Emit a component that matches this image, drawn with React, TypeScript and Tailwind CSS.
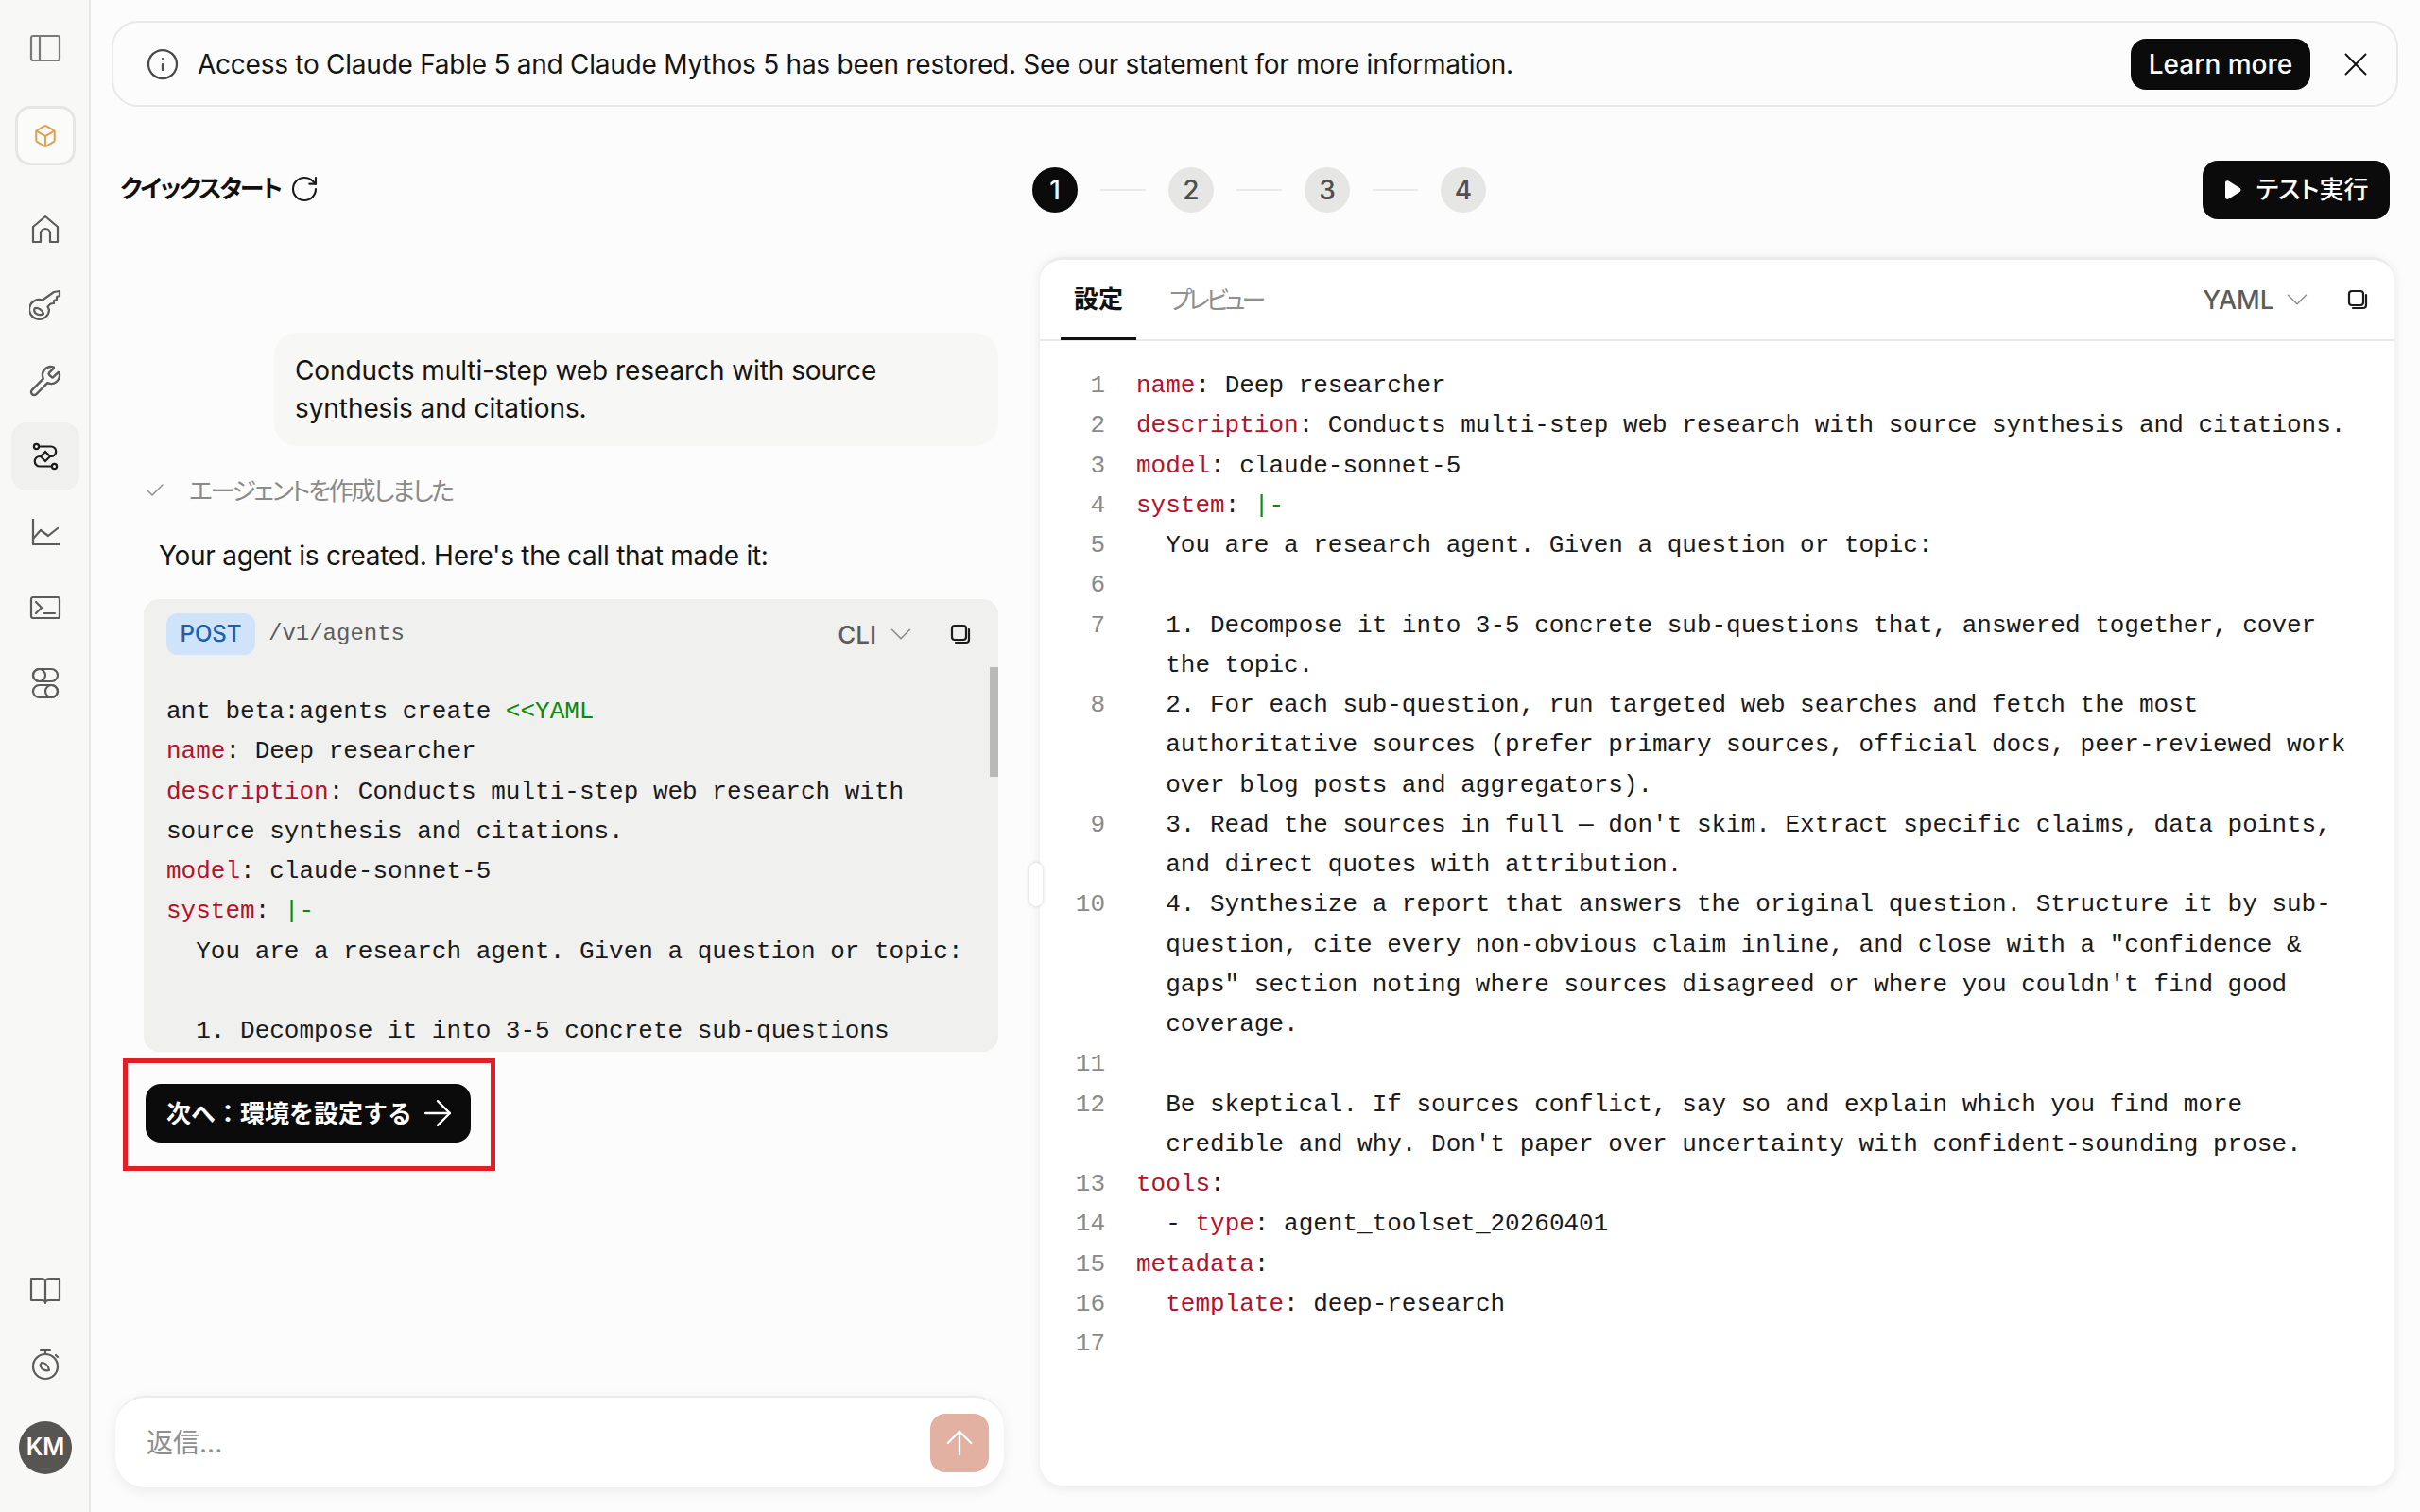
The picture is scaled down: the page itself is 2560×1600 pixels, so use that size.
import React from 'react';
import { ArrowRight, ArrowUp, Box, Check, ChevronDown, Info, RotateCw, Wrench, X } from 'lucide-react';

const sans = 'font-[Inter,"Noto_Sans_CJK_JP",sans-serif]';
const mono = 'font-["Liberation_Mono","Noto_Sans_CJK_JP",monospace]';

const K = ({ children }: { children: React.ReactNode }) => <span className="text-[#b5122b]">{children}</span>;
const G = ({ children }: { children: React.ReactNode }) => <span className="text-[#0a8a0a]">{children}</span>;

const stroke = { fill: 'none', stroke: 'currentColor', strokeWidth: 2.2, strokeLinecap: 'round', strokeLinejoin: 'round' } as const;

const PanelIcon = () => (
  <svg width="34" height="30" viewBox="0 0 34 30" {...stroke}>
    <rect x="2" y="2" width="30" height="26" rx="2" />
    <path d="M11 2v26" />
  </svg>
);

const HomeIcon = () => (
  <svg width="32" height="32" viewBox="0 0 32 32" {...stroke}>
    <path d="M3 29V13L16 2l13 11v16h-8v-9a5 5 0 0 0-10 0v9z" />
  </svg>
);

const KeyIcon = () => (
  <svg width="34" height="34" viewBox="0 0 34 34" {...stroke}>
    <path d="M21 22a10.500 10.500 0 1 1-7-10.500L26 3l6-1v5l-3 1v3l-3 1v3l-3.500.5-3 3z" />
    <path d="M6 20c3-1 8 2 9 6-3 2-7 1-9-1-1-2-1-4 0-5z" />
  </svg>
);

const AgentsIcon = () => (
  <svg width="32" height="32" viewBox="0 0 32 32" fill="none" stroke="currentColor" strokeWidth="2.2">
    <circle cx="6.5" cy="5.5" r="2.6" />
    <circle cx="25.5" cy="26.5" r="2.6" />
    <path d="M10 5.5h12a5.2 5.2 0 0 1 0 10.500H10a5.200 5.200 0 0 0 0 10.500h12" />
    <path d="M16 11l5 5-5 5-5-5z" fill="#f0f0ee" />
  </svg>
);

const ChartIcon = () => (
  <svg width="32" height="30" viewBox="0 0 32 30" {...stroke} strokeLinecap="square">
    <path d="M3 2v26h27" />
    <path d="M3 22l8-9 8 6 10-8" strokeLinecap="round" />
  </svg>
);

const TerminalIcon = () => (
  <svg width="34" height="26" viewBox="0 0 34 26" {...stroke}>
    <rect x="2" y="2" width="30" height="22" rx="2" />
    <path d="M7 7l6 6-6 6M15 19h12" />
  </svg>
);

const TogglesIcon = () => (
  <svg width="32" height="34" viewBox="0 0 32 34" {...stroke}>
    <rect x="3" y="2" width="26" height="13" rx="6.500" />
    <rect x="3" y="19" width="26" height="13" rx="6.500" />
    <circle cx="9.500" cy="8.500" r="6.500" />
    <circle cx="22.500" cy="25.500" r="6.500" />
  </svg>
);

const BookIcon = () => (
  <svg width="34" height="30" viewBox="0 0 34 30" {...stroke}>
    <path d="M2 2h10c3 0 5 1 5 3 0-2 2-3 5-3h10v23H21c-2 0-4 1-4 3 0-2-2-3-4-3H2zM17 5v23" />
  </svg>
);

const TimerIcon = () => (
  <svg width="32" height="34" viewBox="0 0 32 34" {...stroke}>
    <circle cx="16" cy="19" r="13" />
    <path d="M11 2h10M16 2v4M27 7l2 2" />
    <path d="M12 15c3 0 7 2 8 8-4 1-8-1-9-4-.4-1.500 0-3 1-4z" />
  </svg>
);

const CopyIcon = () => (
  <svg width="22" height="22" viewBox="0 0 22 22" {...stroke}>
    <rect x="2" y="2" width="15" height="15" rx="3" />
    <path d="M20 6v11a3 3 0 0 1-3 3H6" />
  </svg>
);

const NavBtn = ({ children, active }: { children: React.ReactNode; active?: boolean }) => (
  <div
    className={`flex h-[72px] w-[72px] items-center justify-center rounded-2xl ${
      active ? 'bg-[#f0f0ee] text-[#1c1c1c]' : 'text-[#5c5c5a]'
    }`}
  >
    {children}
  </div>
);

const Sidebar = () => (
  <aside className="flex h-full w-[96px] shrink-0 flex-col items-center border-r-2 border-[#e6e6e4] bg-[#f8f8f7] pb-10 pl-[2px]">
    <div className="mt-[36px] text-[#7a7a78]">
      <PanelIcon />
    </div>
    <div className="mt-[46px] flex h-[63px] w-[64px] items-center justify-center rounded-2xl border-[3px] border-[#e6e6e4] bg-[#fbfbfa] text-[#dea257]">
      <Box size={26} strokeWidth={1.9} />
    </div>
    <div className="mt-[32px] flex flex-col gap-2">
      <NavBtn><HomeIcon /></NavBtn>
      <NavBtn><KeyIcon /></NavBtn>
      <NavBtn><Wrench size={36} strokeWidth={1.6} /></NavBtn>
      <NavBtn active><AgentsIcon /></NavBtn>
      <NavBtn><ChartIcon /></NavBtn>
      <NavBtn><TerminalIcon /></NavBtn>
      <NavBtn><TogglesIcon /></NavBtn>
    </div>
    <div className="mt-auto flex flex-col items-center text-[#5c5c5a]">
      <BookIcon />
      <div className="mt-[46px]"><TimerIcon /></div>
      <div className="mt-[43px] flex h-14 w-14 items-center justify-center rounded-full bg-[#575552] text-[25px] font-semibold text-white">
        KM
      </div>
    </div>
  </aside>
);

const Banner = () => (
  <div className="ml-[22px] mr-[23px] mt-[22px] flex h-[91px] shrink-0 items-center rounded-[28px] border-2 border-[#e9e9e7] pl-[34px] pr-[22px]">
    <Info size={36} strokeWidth={1.5} className="text-[#4a4a48]" />
    <span className="ml-[19px] text-[28px] tracking-[-0.25px] text-[#141413]">
      Access to Claude Fable 5 and Claude Mythos 5 has been restored. See our statement for more information.
    </span>
    <button className="ml-auto flex h-[54px] w-[190px] items-center justify-center rounded-2xl bg-[#0b0b0b] text-[28px] font-medium text-white">
      Learn more
    </button>
    <X size={42} strokeWidth={1.1} className="ml-[27px] text-[#111]" />
  </div>
);

const Step = ({ n, on }: { n: number; on?: boolean }) => (
  <div
    className={`flex h-12 w-12 items-center justify-center rounded-full text-[28px] font-medium ${
      on ? 'bg-[#0b0b0b] text-white' : 'bg-[#e6e6e4] text-[#504f4d]'
    }`}
  >
    {n}
  </div>
);

const StepLine = () => <div className="mx-6 h-[2px] w-12 bg-[#e9e9e7]" />;

const ChatColumn = () => (
  <div className="flex w-[1004px] shrink-0 flex-col pl-[38px]">
    <div className="ml-[-7px] flex h-[62px] items-center pb-[3px]">
      <span className="text-[26px] font-semibold tracking-[-2px] text-[#111] [font-feature-settings:'palt']">クイックスタート</span>
      <RotateCw size={32} strokeWidth={1.6} className="ml-[9px] text-[#1c1c1c]" />
    </div>
    <div className="ml-[156px] mt-[120px] w-[766px] rounded-3xl bg-[#f7f7f5] py-5 pl-[22px] pr-8 text-[28px] leading-[40px] tracking-[-0.08px] text-[#141413]">
      Conducts multi-step web research with source synthesis and citations.
    </div>
    <div className="ml-[18px] mt-[28px] flex h-[38px] items-center text-[#8a8a88]">
      <Check size={24} strokeWidth={1.4} />
      <span className="ml-6 text-[26px] tracking-[-2.3px] [font-feature-settings:'palt']">エージェントを作成しました</span>
    </div>
    <div className="ml-[34px] mt-[30px] text-[28px] leading-[40px] tracking-[-0.28px] text-[#141413]">
      Your agent is created. Here's the call that made it:
    </div>
    <div className="relative ml-[18px] mt-[26px] h-[479px] w-[904px] overflow-hidden rounded-2xl bg-[#f0f0ef]">
      <div className="flex h-[72px] items-center pl-6 pr-[29px] pt-[2px]">
        <span className="flex h-[44px] w-[94px] items-center justify-center rounded-xl bg-[#cfe3fb] text-[24px] font-medium text-[#1d5fa8]">
          POST
        </span>
        <span className={`${mono} ml-[14px] text-[24px] text-[#5c5c5a]`}>/v1/agents</span>
        <span className="ml-auto text-[26px] font-medium text-[#5c5c5a]">CLI</span>
        <ChevronDown size={38} strokeWidth={1} className="ml-[7px] text-[#8a8a88]" />
        <div className="ml-[33px] text-[#1c1c1c]"><CopyIcon /></div>
      </div>
      <div className={`${mono} mt-[26px] whitespace-pre-wrap pl-6 pr-8 text-[26px] leading-[42.25px] text-[#1a1a1a]`}>
        <div>ant beta:agents create <G>&lt;&lt;YAML</G></div>
        <div><K>name</K>: Deep researcher</div>
        <div><K>description</K>: Conducts multi-step web research with</div>
        <div>source synthesis and citations.</div>
        <div><K>model</K>: claude-sonnet-5</div>
        <div><K>system</K>: <G>|-</G></div>
        <div>  You are a research agent. Given a question or topic:</div>
        <div>&nbsp;</div>
        <div>  1. Decompose it into 3-5 concrete sub-questions</div>
      </div>
      <div className="absolute right-0 top-[72px] h-[116px] w-[9px] bg-[#b9b9b7]" />
    </div>
    <div className="relative ml-[20px] mt-[34px] flex h-[62px] w-[344px] items-center rounded-2xl bg-[#0b0b0b] pl-[22px] text-white">
      <span className="text-[26px] font-semibold">次へ：環境を設定する</span>
      <ArrowRight size={44} strokeWidth={1.3} className="absolute left-[287px] top-[9px]" />
      <div className="pointer-events-none absolute -left-6 -top-[27px] h-[119px] w-[394px] border-[5px] border-[#e01f26]" />
    </div>
    <div className="ml-[-12px] mt-auto flex h-[97px] w-[940px] shrink-0 items-center rounded-[32px] border-t-2 border-[#ececea] bg-white pl-[33px] pr-4 shadow-[0_4px_14px_rgba(0,0,0,0.07)]">
      <span className="text-[28px] text-[#8f8f8d]">返信...</span>
      <div className="ml-auto flex h-[62px] w-[62px] items-center justify-center rounded-2xl bg-[#e2b1a1] text-white">
        <ArrowUp size={42} strokeWidth={1.3} />
      </div>
    </div>
  </div>
);

const yamlLines: { n: number; rows: React.ReactNode[] }[] = [
  { n: 1, rows: [<><K>name</K>: Deep researcher</>] },
  { n: 2, rows: [<><K>description</K>: Conducts multi-step web research with source synthesis and citations.</>] },
  { n: 3, rows: [<><K>model</K>: claude-sonnet-5</>] },
  { n: 4, rows: [<><K>system</K>: <G>|-</G></>] },
  { n: 5, rows: ['  You are a research agent. Given a question or topic:'] },
  { n: 6, rows: [' '] },
  { n: 7, rows: ['  1. Decompose it into 3-5 concrete sub-questions that, answered together, cover', '  the topic.'] },
  { n: 8, rows: ['  2. For each sub-question, run targeted web searches and fetch the most', '  authoritative sources (prefer primary sources, official docs, peer-reviewed work', '  over blog posts and aggregators).'] },
  { n: 9, rows: ["  3. Read the sources in full — don't skim. Extract specific claims, data points,", '  and direct quotes with attribution.'] },
  { n: 10, rows: ['  4. Synthesize a report that answers the original question. Structure it by sub-', '  question, cite every non-obvious claim inline, and close with a "confidence &', "  gaps\" section noting where sources disagreed or where you couldn't find good", '  coverage.'] },
  { n: 11, rows: [' '] },
  { n: 12, rows: ['  Be skeptical. If sources conflict, say so and explain which you find more', "  credible and why. Don't paper over uncertainty with confident-sounding prose."] },
  { n: 13, rows: [<><K>tools</K>:</>] },
  { n: 14, rows: [<>  - <K>type</K>: agent_toolset_20260401</>] },
  { n: 15, rows: [<><K>metadata</K>:</>] },
  { n: 16, rows: [<>  <K>template</K>: deep-research</>] },
  { n: 17, rows: [' '] },
];

const ConfigColumn = () => (
  <div className="flex min-w-0 flex-1 flex-col pr-[27px]">
    <div className="flex h-[62px] items-center">
      <div className="ml-[-8px] flex items-center">
        <Step n={1} on />
        <StepLine />
        <Step n={2} />
        <StepLine />
        <Step n={3} />
        <StepLine />
        <Step n={4} />
      </div>
      <button className="ml-auto mr-[5px] flex h-[62px] w-[198px] items-center justify-center gap-[14px] rounded-2xl bg-[#0b0b0b] text-[26px] font-medium text-white">
        <svg width="20" height="22" viewBox="0 0 20 22" fill="white"><path d="M2 3.500C2 1.500 3.800.6 5.500 1.600l12 7.500c1.300.8 1.300 3 0 3.800l-12 7.500C3.800 21.400 2 20.500 2 18.500z" /></svg>
        <span className="pb-[2px] [font-feature-settings:'palt']">テスト実行</span>
      </button>
    </div>
    <div className="mt-[40px] flex h-[1300px] flex-col rounded-[24px] border-t-[3px] border-[#ebebe9] bg-white shadow-[0_2px_12px_rgba(0,0,0,0.09)]">
      <div className="flex h-[86px] shrink-0 items-center border-b-2 border-[#e9e9e7] pl-[22px] pr-[28px]">
        <div className="-mb-[2px] flex h-full w-[80px] items-center justify-center border-b-[3px] border-[#111]">
          <span className="text-[26px] font-semibold text-[#111]">設定</span>
        </div>
        <span className="ml-[35px] text-[26px] tracking-[-4px] text-[#8f8f8d] [font-feature-settings:'palt']">プレビュー</span>
        <span className="ml-auto pt-[2px] text-[27px] font-medium text-[#5c5c5a]">YAML</span>
        <ChevronDown size={38} strokeWidth={1} className="ml-[5px] text-[#8f8f8d]" />
        <div className="ml-[34px] text-[#1c1c1c]"><CopyIcon /></div>
      </div>
      <div className={`${mono} mt-[26px] text-[26px] leading-[42.25px] text-[#1a1a1a]`}>
        {yamlLines.map((l) => (
          <div key={l.n} className="flex">
            <div className="w-[69px] shrink-0 text-right text-[#8a8a88]">{l.n}</div>
            <div className="ml-[33px] whitespace-pre">
              {l.rows.map((r, i) => (
                <div key={i}>{r}</div>
              ))}
            </div>
          </div>
        ))}
      </div>
    </div>
  </div>
);

export default function App() {
  return (
    <div className={`${sans} flex h-[1600px] w-[2560px] overflow-hidden bg-[#fcfcfc]`}>
      <Sidebar />
      <main className="relative flex h-full min-w-0 flex-1 flex-col">
        <Banner />
        <div className="mt-[57px] flex min-h-0 flex-1 pb-[26px]">
          <ChatColumn />
          <ConfigColumn />
        </div>
        <div className="absolute left-[993px] top-[913px] h-[46px] w-[14px] rounded-lg bg-white shadow-[0_0_4px_rgba(0,0,0,0.18)]" />
      </main>
    </div>
  );
}
